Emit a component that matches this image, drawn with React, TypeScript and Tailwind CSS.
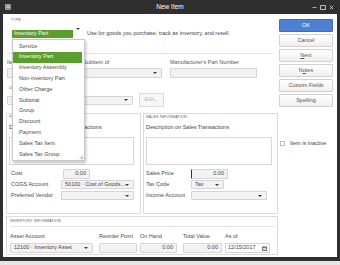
import React from "react";

const typeItems = [
  "Service",
  "Inventory Part",
  "Inventory Assembly",
  "Non-inventory Part",
  "Other Charge",
  "Subtotal",
  "Group",
  "Discount",
  "Payment",
  "Sales Tax Item",
  "Sales Tax Group",
];

function Caret() {
  return (
    <span className="w-0 h-0 shrink-0 border-l-[2px] border-r-[2px] border-t-[2px] border-l-transparent border-r-transparent border-t-[#3a3a3a]" />
  );
}

function Select({ text, className }: { text?: string; className: string }) {
  return (
    <div
      className={`h-[9px] bg-[#f2f2f2] border border-[#d5d5d5] rounded-[1px] flex items-center justify-between pl-[3px] pr-[4px] ${className}`}
    >
      <span className="truncate text-[#444]">{text}</span>
      <Caret />
    </div>
  );
}

function Field({ text, className }: { text?: string; className: string }) {
  return (
    <div
      className={`h-[10px] bg-[#f2f2f2] border border-[#d5d5d5] rounded-[1px] flex items-center justify-end px-[3px] text-[#444] ${className}`}
    >
      {text}
    </div>
  );
}

function Header({ children }: { children: React.ReactNode }) {
  return <div className="text-[3.6px] uppercase tracking-[0.2px] text-[#555]">{children}</div>;
}

function Btn({ children, primary }: { children: React.ReactNode; primary?: boolean }) {
  return (
    <div
      className={`h-[13px] rounded-[1px] flex items-center justify-center border ${
        primary
          ? "bg-[#4d80d2] border-[#3c6cbd] text-white"
          : "bg-gradient-to-b from-white to-[#efefef] border-[#d2d2d2] text-[#555]"
      }`}
    >
      {children}
    </div>
  );
}

export default function App() {
  return (
    <div className="w-[340px] h-[265px] bg-[#e6e6e6] font-['Liberation_Sans',Arial,sans-serif] text-[5.5px] leading-none text-[#4a4a4a]">
      <div className="w-[340px] h-[261px] bg-[#2f2f2f] flex flex-col">
        {/* title bar */}
        <div className="h-[14px] shrink-0 grid grid-cols-[1fr_auto_1fr] items-center px-[5px]">
          <svg width="6" height="6" viewBox="0 0 6 6">
            <rect x="0.5" y="0.5" width="5" height="5" fill="#8a8a8a" stroke="#bbb" strokeWidth="0.6" />
            <rect x="1.5" y="1.6" width="3" height="0.7" fill="#eee" />
            <rect x="1.5" y="3.2" width="3" height="0.7" fill="#eee" />
          </svg>
          <span className="text-white text-[6.5px]">New Item</span>
          <div className="flex items-center justify-end gap-[3px] pr-[1px]">
            <svg width="5" height="5" viewBox="0 0 5 5">
              <rect x="0.5" y="2.2" width="4" height="0.8" fill="#cfcfcf" />
            </svg>
            <svg width="6" height="5" viewBox="0 0 6 5">
              <rect x="0.6" y="0.6" width="4.8" height="3.8" fill="none" stroke="#cfcfcf" strokeWidth="0.9" />
            </svg>
            <svg width="5" height="5" viewBox="0 0 5 5">
              <path d="M0.8 0.8 L4.2 4.2 M4.2 0.8 L0.8 4.2" stroke="#cfcfcf" strokeWidth="0.9" />
            </svg>
          </div>
        </div>

        {/* window body */}
        <div className="flex-1 mx-[3px] mb-[4px] bg-white flex relative">
          <div className="w-[275px] flex flex-col">
            <div className="mt-[5px] ml-[8px] h-[5px]">
              <Header>Type</Header>
            </div>

            <div className="mt-[6px] h-[8px] ml-[9px] flex items-center">
              <div className="w-[61px] h-[8px] bg-[#5b9e2e] text-white flex items-center pl-[2px]">
                Inventory Part
              </div>
              <span className="ml-[3px]">
                <Caret />
              </span>
              <span className="ml-[7px] text-[#444]">
                Use for goods you purchase, track as inventory, and resell.
              </span>
            </div>

            <div className="mt-[15px] ml-[4px] w-[266px] h-px bg-[#e3e3e3]" />

            <div className="mt-[6px] h-[6px] ml-[4px] flex items-center text-[#555]">
              <span className="w-[76px]">Item Name/Number</span>
              <span className="w-[87px]">Subitem of</span>
              <span>Manufacturer's Part Number</span>
            </div>
            <div className="mt-[2px] h-[10px] ml-[4px] flex items-center">
              <div className="w-[73px] h-[10px] bg-[#f2f2f2] border border-[#d5d5d5]" />
              <Select className="ml-[3px] w-[79px] h-[10px]" />
              <div className="ml-[8px] w-[87px] h-[10px] bg-[#f2f2f2] border border-[#d5d5d5]" />
            </div>

            <div className="mt-[9px] h-[5px] ml-[6px]">
              <Header>Unit of Measure</Header>
            </div>
            <div className="mt-[1px] h-[14px] ml-[4px] flex items-center">
              <Select className="w-[126px]" />
              <div className="ml-[6px] w-[25px] h-[14px] border border-[#dadada] bg-[#f7f7f7] flex items-center justify-center text-[#b5b5b5]">
                Edit...
              </div>
            </div>

            {/* purchase / sales */}
            <div className="mt-[6px] ml-[3px] h-[101px] flex gap-[2px]">
              <div className="w-[135px] border border-[#dcdcdc] flex flex-col pl-[2px] pr-[6px]">
                <div className="mt-[2px] h-[4px]">
                  <Header>Purchase Information</Header>
                </div>
                <div className="mt-[5px] h-[6px] text-[#444]">Description on Purchase Transactions</div>
                <div className="mt-[6px] h-[28px] border border-[#d8d8d8] bg-white" />
                <div className="mt-[3px] flex flex-col pl-[2px]">
                  <div className="h-[11px] flex items-center">
                    <span className="w-[52px]">Cost</span>
                    <Field className="w-[27px] h-[9px]" text="0.00" />
                  </div>
                  <div className="h-[11px] flex items-center">
                    <span className="w-[52px]">COGS Account</span>
                    <Select className="w-[75px]" text="50100 · Cost of Goods..." />
                  </div>
                  <div className="h-[11px] flex items-center">
                    <span className="w-[52px]">Preferred Vendor</span>
                    <Select className="w-[75px]" />
                  </div>
                </div>
              </div>

              <div className="w-[135px] border border-[#dcdcdc] flex flex-col pl-[2px] pr-[5px]">
                <div className="mt-[2px] h-[4px]">
                  <Header>Sales Information</Header>
                </div>
                <div className="mt-[5px] h-[6px] text-[#444]">Description on Sales Transactions</div>
                <div className="mt-[6px] h-[28px] border border-[#d8d8d8] bg-white" />
                <div className="mt-[3px] flex flex-col">
                  <div className="h-[11px] flex items-center">
                    <span className="w-[45px]">Sales Price</span>
                    <Field className="w-[37px] border-l-[#333]" text="0.00" />
                  </div>
                  <div className="h-[11px] flex items-center">
                    <span className="w-[45px]">Tax Code</span>
                    <Select className="w-[33px]" text="Tax" />
                  </div>
                  <div className="h-[11px] flex items-center">
                    <span className="w-[45px]">Income Account</span>
                    <Select className="w-[76px]" />
                  </div>
                </div>
              </div>
            </div>

            {/* inventory */}
            <div className="mt-[2px] ml-[3px] w-[272px] h-[39px] border border-[#dcdcdc] flex flex-col px-[3px]">
              <div className="mt-[3px] h-[4px]">
                <Header>Inventory Information</Header>
              </div>
              <div className="mt-[2px] h-px bg-[#e3e3e3]" />
              <div className="mt-[7px] h-[6px] flex items-center">
                <span className="w-[89px]">Asset Account</span>
                <span className="w-[41px]">Reorder Point</span>
                <span className="w-[43px]">On Hand</span>
                <span className="w-[42px]">Total Value</span>
                <span>As of</span>
              </div>
              <div className="mt-[3px] h-[10px] flex items-center">
                <Select className="w-[83px] h-[10px]" text="12100 · Inventory Asset" />
                <Field className="ml-[6px] w-[38px]" />
                <Field className="ml-[3px] w-[37px]" text="0.00" />
                <Field className="ml-[6px] w-[39px]" text="0.00" />
                <div className="ml-[3px] w-[45px] h-[10px] border border-[#d5d5d5] bg-white flex items-center justify-between px-[2px] text-[#444]">
                  <span>12/15/2017</span>
                  <svg width="5" height="5" viewBox="0 0 5 5">
                    <rect x="0" y="0.5" width="5" height="4.5" fill="#666" />
                    <rect x="0.8" y="1.8" width="3.4" height="2.4" fill="#ddd" />
                  </svg>
                </div>
              </div>
            </div>
          </div>

          {/* buttons column */}
          <div className="ml-[1px] w-[54px] flex flex-col">
            <div className="mt-[5px] flex flex-col gap-[2px]">
              <Btn primary>OK</Btn>
              <Btn>Cancel</Btn>
              <Btn>
                <span>
                  <span className="underline">N</span>ext
                </span>
              </Btn>
              <Btn>
                <span>
                  N<span className="underline">o</span>tes
                </span>
              </Btn>
              <Btn>Custom Fields</Btn>
              <Btn>Spelling</Btn>
            </div>
            <div className="mt-[34px] ml-[1px] flex items-center">
              <span className="w-[5px] h-[5px] border border-[#bdbdbd] bg-white" />
              <span className="ml-[5px] text-[#444]">Item is inactive</span>
            </div>
          </div>

          {/* open type dropdown */}
          <div className="absolute left-[9px] top-[25px] w-[73px] h-[122px] bg-white border border-[#c9c9c9] shadow-[1px_2px_3px_rgba(0,0,0,0.25)] pt-[1px]">
            {typeItems.map((item) => (
              <div
                key={item}
                className={`h-[10.8px] mr-[2px] flex items-center pl-[6px] ${
                  item === "Inventory Part" ? "bg-[#5b9e2e] text-white" : "text-[#4a4a4a]"
                }`}
              >
                {item}
              </div>
            ))}
            <svg className="absolute right-[1px] bottom-[1px]" width="4" height="4" viewBox="0 0 4 4">
              <path d="M4 0 L4 4 L0 4 Z" fill="#c4c4c4" />
            </svg>
          </div>
        </div>
      </div>
    </div>
  );
}
